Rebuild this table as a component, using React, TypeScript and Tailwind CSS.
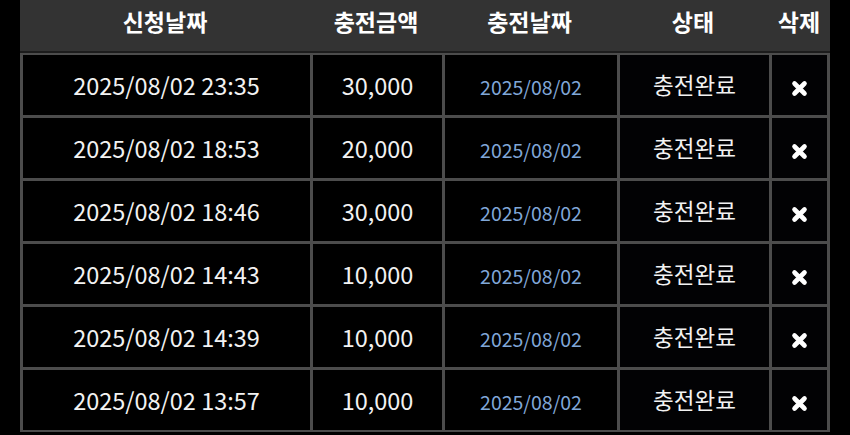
import React from "react";

const rows = [
  { req: "2025/08/02 23:35", amt: "30,000" },
  { req: "2025/08/02 18:53", amt: "20,000" },
  { req: "2025/08/02 18:46", amt: "30,000" },
  { req: "2025/08/02 14:43", amt: "10,000" },
  { req: "2025/08/02 14:39", amt: "10,000" },
  { req: "2025/08/02 13:57", amt: "10,000" },
];

const cols = "grid grid-cols-[287px_129px_172px_149px_55px] gap-x-[3px]";

function XIcon() {
  return (
    <svg width="17" height="17" viewBox="0 0 17 17" className="mt-[6px]">
      <path d="M3.5 3.5 L13.5 13.5 M13.5 3.5 L3.5 13.5" stroke="#ffffff" strokeWidth="4.6" strokeLinecap="round" />
    </svg>
  );
}

export default function App() {
  return (
    <div
      className="w-[850px] h-[435px] bg-black overflow-hidden"
      style={{ fontFamily: '"Noto Sans CJK KR", "Noto Sans", sans-serif' }}
    >
      <div className="mx-[20px] w-[810px]">
        <div className="h-[51px] bg-[#333333] grid grid-cols-[290px_132px_175px_152px_61px] text-white font-bold text-[23px] leading-[32px] pt-[5px]">
          <div className="text-center">신청날짜</div>
          <div className="text-center">충전금액</div>
          <div className="text-center">충전날짜</div>
          <div className="text-center">상태</div>
          <div className="text-center pr-[1px]">삭제</div>
        </div>
        <div className="h-[2px] bg-[#1c1c1c]" />
        <div className="bg-[#4c4c4c] p-[2px] pl-[3px] pr-[3px] flex flex-col gap-y-[3px]">
          {rows.map((r, i) => (
            <div key={i} className={`${cols} h-[60px]`}>
              <div className="bg-black flex items-center justify-center text-[#f2f2f2] text-[23.5px] pt-[1px]">{r.req}</div>
              <div className="bg-black flex items-center justify-center text-[#f2f2f2] text-[23.5px] pt-[1px]">{r.amt}</div>
              <div className="bg-black flex items-center justify-center text-[#80a7d8] text-[19.5px] pt-[3px]">2025/08/02</div>
              <div className="bg-[#020204] flex items-center justify-center text-[#f2f2f2] text-[22.5px]">충전완료</div>
              <div className="bg-[#020204] flex items-center justify-center">
                <XIcon />
              </div>
            </div>
          ))}
        </div>
      </div>
    </div>
  );
}
